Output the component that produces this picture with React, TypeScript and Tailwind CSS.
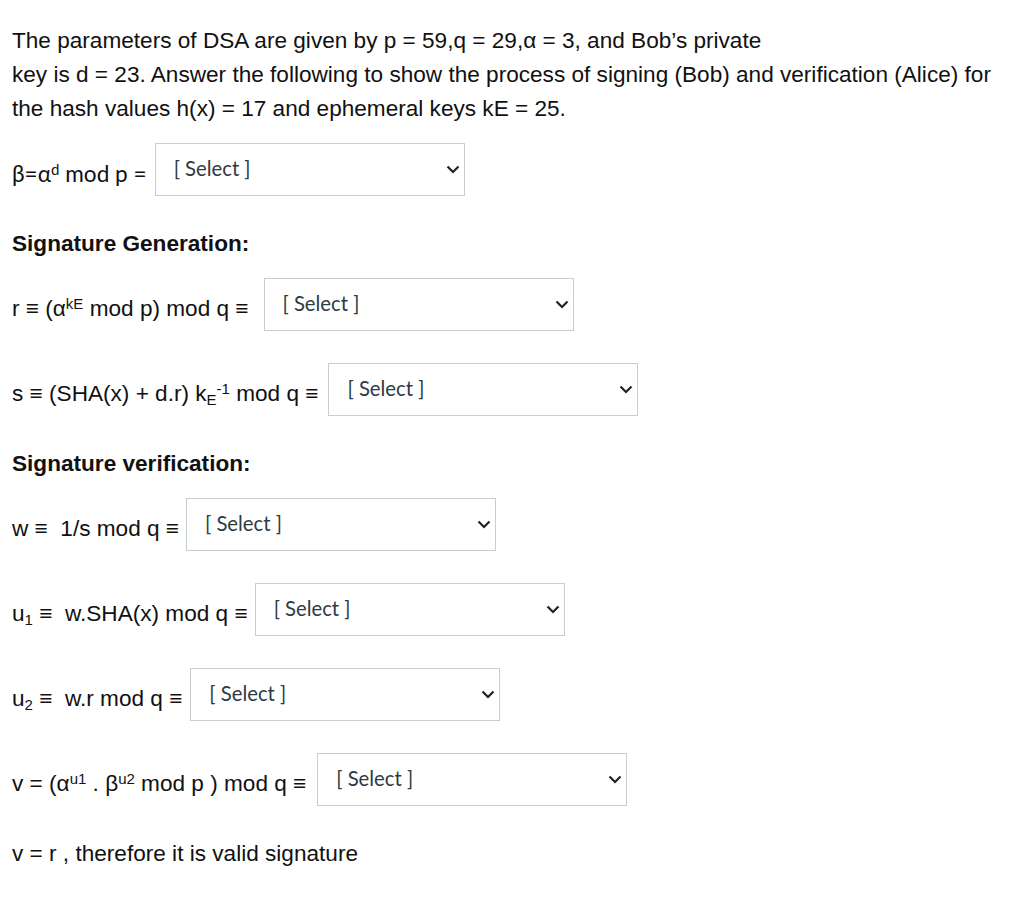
import React from 'react';

const arial = { fontFamily: '"Liberation Sans", Arial, sans-serif' };
const lato = { fontFamily: 'Lato, "Noto Sans", sans-serif' };

function Select() {
  return (
    <div
      className="flex h-[53px] w-[310px] shrink-0 items-start justify-between border border-[#c7cdd1] bg-white pl-[18px] pr-[4px] pt-[11px] text-[20.3px] text-[#2d3b45]"
      style={lato}
    >
      <span className="leading-[26px]">[ Select ]</span>
      <svg width="14" height="9" viewBox="0 0 14 9" className="mt-[10px]">
        <path d="M1.5 1.5 7 7l5.5-5.5" fill="none" stroke="#222" strokeWidth="2.2" />
      </svg>
    </div>
  );
}

function Row({
  children,
  font = arial,
  className = '',
  gap = 'gap-[8px]',
}: {
  children: React.ReactNode;
  font?: React.CSSProperties;
  className?: string;
  gap?: string;
}) {
  return (
    <div className={`flex items-center ${gap} ${className}`}>
      <span className="mt-[9px] whitespace-nowrap text-[22.6px] leading-[26px] text-[#111]" style={font}>
        {children}
      </span>
      <Select />
    </div>
  );
}

export default function App() {
  return (
    <div className="min-h-[911px] w-[1024px] bg-white pl-[12px] pt-[24px] text-[#111]" style={arial}>
      <p className="whitespace-nowrap text-[22.6px] leading-[34px]">
        The parameters of DSA are given by p = 59,q = 29,α = 3, and Bob’s private
        <br />
        key is d = 23. Answer the following to show the process of signing (Bob) and verification (Alice) for
        <br />
        the hash values h(x) = 17 and ephemeral keys kE = 25.
      </p>

      <Row className="mt-[17px]" font={lato}>
        β=α<sup className="text-[15px]">d</sup> mod p =
      </Row>

      <p className="mt-[35px] text-[22.6px] font-bold leading-[26px]">Signature Generation:</p>

      <Row className="mt-[21px]" gap="gap-[15px]">
        r ≡ (α<sup className="text-[15px]">kE</sup> mod p) mod q ≡
      </Row>
      <Row className="mt-[32px]" gap="gap-[10px]">
        s ≡ (SHA(x) + d.r) k<sub className="text-[15px]">E</sub>
        <sup className="text-[15px]">-1</sup> mod q ≡
      </Row>

      <p className="mt-[35px] text-[22.6px] font-bold leading-[26px]">Signature verification:</p>

      <Row className="mt-[21px]" gap="gap-[7px]">w ≡&nbsp; 1/s mod q ≡</Row>
      <Row className="mt-[32px]" gap="gap-[7px]">
        u<sub className="text-[15px]">1</sub> ≡&nbsp; w.SHA(x) mod q ≡
      </Row>
      <Row className="mt-[32px]">
        u<sub className="text-[15px]">2</sub> ≡&nbsp; w.r mod q ≡
      </Row>
      <Row className="mt-[32px]" gap="gap-[11px]">
        v = (α<sup className="text-[15px]">u1</sup> . β<sup className="text-[15px]">u2</sup> mod p ) mod q ≡
      </Row>

      <p className="mt-[35px] text-[22.6px] leading-[26px]">v = r , therefore it is valid signature</p>
    </div>
  );
}
